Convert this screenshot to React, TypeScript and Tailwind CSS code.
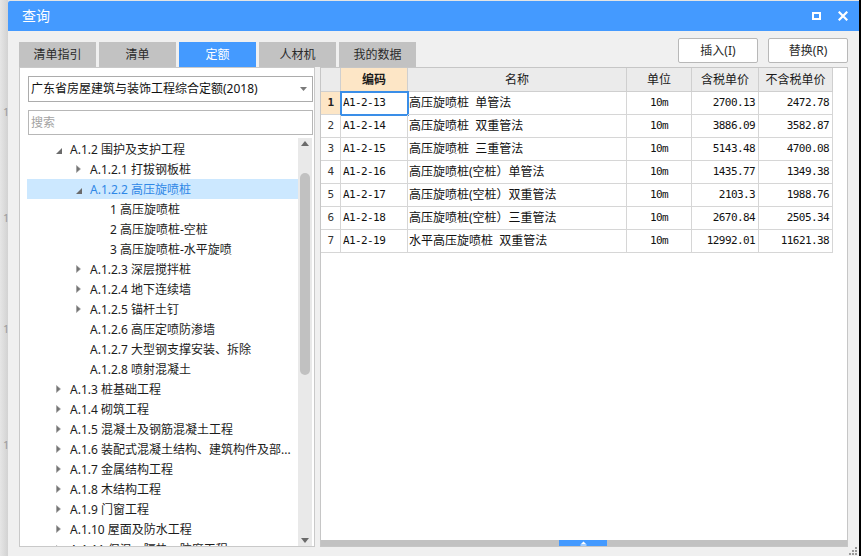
import React from 'react';

const sans = "font-['Noto_Sans','Noto_Sans_CJK_SC',sans-serif]";
const mono = "font-['DejaVu_Sans_Mono','Noto_Sans_CJK_SC',monospace] text-[11px] tracking-[-0.6px]";

type Node = { lvl: 1 | 2 | 3; arrow?: 'open' | 'closed'; text: string; sel?: boolean };

const tree: Node[] = [
  { lvl: 1, arrow: 'open', text: 'A.1.2 围护及支护工程' },
  { lvl: 2, arrow: 'closed', text: 'A.1.2.1 打拔钢板桩' },
  { lvl: 2, arrow: 'open', text: 'A.1.2.2 高压旋喷桩', sel: true },
  { lvl: 3, text: '1 高压旋喷桩' },
  { lvl: 3, text: '2 高压旋喷桩-空桩' },
  { lvl: 3, text: '3 高压旋喷桩-水平旋喷' },
  { lvl: 2, arrow: 'closed', text: 'A.1.2.3 深层搅拌桩' },
  { lvl: 2, arrow: 'closed', text: 'A.1.2.4 地下连续墙' },
  { lvl: 2, arrow: 'closed', text: 'A.1.2.5 锚杆土钉' },
  { lvl: 2, text: 'A.1.2.6 高压定喷防渗墙' },
  { lvl: 2, text: 'A.1.2.7 大型钢支撑安装、拆除' },
  { lvl: 2, text: 'A.1.2.8 喷射混凝土' },
  { lvl: 1, arrow: 'closed', text: 'A.1.3 桩基础工程' },
  { lvl: 1, arrow: 'closed', text: 'A.1.4 砌筑工程' },
  { lvl: 1, arrow: 'closed', text: 'A.1.5 混凝土及钢筋混凝土工程' },
  { lvl: 1, arrow: 'closed', text: 'A.1.6 装配式混凝土结构、建筑构件及部...' },
  { lvl: 1, arrow: 'closed', text: 'A.1.7 金属结构工程' },
  { lvl: 1, arrow: 'closed', text: 'A.1.8 木结构工程' },
  { lvl: 1, arrow: 'closed', text: 'A.1.9 门窗工程' },
  { lvl: 1, arrow: 'closed', text: 'A.1.10 屋面及防水工程' },
  { lvl: 1, arrow: 'closed', text: 'A.1.11 保温、隔热、防腐工程' },
];

const rows = [
  ['1', 'A1-2-13', '高压旋喷桩\u00a0\u00a0单管法', '10m', '2700.13', '2472.78'],
  ['2', 'A1-2-14', '高压旋喷桩\u00a0\u00a0双重管法', '10m', '3886.09', '3582.87'],
  ['3', 'A1-2-15', '高压旋喷桩\u00a0\u00a0三重管法', '10m', '5143.48', '4700.08'],
  ['4', 'A1-2-16', '高压旋喷桩(空桩）单管法', '10m', '1435.77', '1349.38'],
  ['5', 'A1-2-17', '高压旋喷桩(空桩）双重管法', '10m', '2103.3', '1988.76'],
  ['6', 'A1-2-18', '高压旋喷桩(空桩）三重管法', '10m', '2670.84', '2505.34'],
  ['7', 'A1-2-19', '水平高压旋喷桩\u00a0\u00a0双重管法', '10m', '12992.01', '11621.38'],
];

function Arrow({ kind }: { kind?: 'open' | 'closed' }) {
  if (kind === 'open')
    return (
      <svg width="6" height="6" viewBox="0 0 6 6" className="mt-[3px]">
        <polygon points="6,0 6,6 0,6" fill="#6b6b6b" />
      </svg>
    );
  if (kind === 'closed')
    return (
      <svg width="5" height="8" viewBox="0 0 5 8">
        <polygon points="0.5,0.5 4.5,4 0.5,7.5" fill="#737373" stroke="#9a9a9a" strokeWidth="0.6" />
      </svg>
    );
  return null;
}

function TreeRow({ n }: { n: Node }) {
  const spacer = n.lvl === 1 ? 'w-[29px]' : n.lvl === 2 ? 'w-[49px]' : 'w-[69px]';
  return (
    <div
      className={`h-[20px] shrink-0 flex items-center ${
        n.sel ? 'bg-[#cce8ff] text-[#2f87e6]' : 'text-[#1c1c1c]'
      }`}
    >
      <div className={`${spacer} shrink-0`} />
      <div className="w-[14px] shrink-0 flex items-center">
        <Arrow kind={n.arrow} />
      </div>
      <span className="whitespace-nowrap text-[12px] leading-[20px] pt-[1px]">{n.text}</span>
    </div>
  );
}

const headCell = 'h-[24px] border-r border-b border-[#cfcfcf] bg-[#ebebeb] flex items-center justify-center text-[12px] text-[#1a1a1a]';
const cell = 'h-[23px] border-r border-b border-[#d6d6d6] flex items-center';

export default function App() {
  return (
    <div className={`w-[861px] h-[556px] flex overflow-hidden bg-[#f0f0f0] ${sans}`}>
      {/* background strip at left */}
      <div className="w-[8px] h-full shrink-0 flex bg-gradient-to-r from-[#e6e6e6] to-[#d2d2d2]">
        <div className="flex-1 flex flex-col text-[#9a9a9a] text-[11px] leading-none pl-[3px]">
          <div className="h-[106px]" />
          <span>1</span>
          <div className="h-[95px]" />
          <span>1</span>
          <div className="h-[100px]" />
          <span>1</span>
          <div className="h-[105px]" />
          <span>1</span>
        </div>
        <div className="w-[1px] h-full bg-[#a9a9a9]" />
      </div>

      {/* window */}
      <div className="flex-1 flex flex-col relative">
        <div className="h-[1px] bg-[#e4e4e4]" />
        <div className="h-[31px] bg-[#449aff] rounded-tl-[2px] flex items-center pl-[14px] pr-[10px]">
          <span className="text-white text-[14px] leading-none">查询</span>
          <div className="flex-1" />
          <div className="w-[9px] h-[8px] border-2 border-white mr-[17px] mb-[1px]" />
          <svg width="10" height="10" viewBox="0 0 10 10" className="mr-[1px]">
            <path d="M1.5 1.5 L8.5 8.5 M8.5 1.5 L1.5 8.5" stroke="white" strokeWidth="2.2" strokeLinecap="square" />
          </svg>
        </div>

        {/* toolbar */}
        <div className="mt-[7px] h-[29px] flex pl-[11px] pr-[11px]">
          <div className="self-end flex gap-[3px]">
            {['清单指引', '清单', '定额', '人材机', '我的数据'].map((t, i) => (
              <div
                key={t}
                className={`w-[77px] h-[25px] flex items-center justify-center text-[12px] ${
                  i === 2 ? 'bg-[#449aff] text-white' : 'bg-[#c2c2c2] text-[#2a2a2a]'
                }`}
              >
                {t}
              </div>
            ))}
          </div>
          <div className="flex-1" />
          <div className="self-start flex gap-[10px]">
            {['插入(I)', '替换(R)'].map((t) => (
              <div
                key={t}
                className="w-[80px] h-[25px] bg-white border border-[#b8b8b8] rounded-[2px] flex items-center justify-center text-[12px] text-[#2a2a2a]"
              >
                {t}
              </div>
            ))}
          </div>
        </div>

        {/* main */}
        <div className="h-[480px] flex pl-[11px] pr-[11px] gap-[5px]">
          {/* left panel */}
          <div className="w-[296px] h-full bg-white border border-[#c9c9c9] flex flex-col">
            <div className="mt-[8px] ml-[8px] mr-[1px] h-[26px] border border-[#acacac] flex items-center pl-[2px] pr-[5px]">
              <span className="text-[12px] text-[#111] whitespace-nowrap">广东省房屋建筑与装饰工程综合定额(2018)</span>
              <div className="flex-1" />
              <svg width="7" height="4" viewBox="0 0 7 4">
                <polygon points="0,0 7,0 3.5,4" fill="#7a7a7a" />
              </svg>
            </div>
            <div className="mt-[8px] ml-[8px] mr-[1px] h-[25px] border border-[#b7b7b7] flex items-center pl-[2px]">
              <span className="text-[12px] text-[#a3a3a3]">搜索</span>
            </div>
            <div className="mt-[3px] flex-1 min-h-0 flex">
              <div className="ml-[7px] w-[271px] h-full overflow-hidden flex flex-col pt-[1px]">
                {tree.map((n, i) => (
                  <TreeRow key={i} n={n} />
                ))}
              </div>
              <div className="w-[14px] h-full bg-[#e9e9e9] flex flex-col items-center">
                <svg width="8" height="5" viewBox="0 0 8 5" className="mt-[3px]">
                  <polygon points="4,0 8,5 0,5" fill="#6a6a6a" />
                </svg>
                <div className="mt-[27px] w-[10px] h-[202px] rounded-full bg-[#c1c1c1]" />
                <div className="flex-1" />
                <svg width="8" height="5" viewBox="0 0 8 5" className="mb-[3px]">
                  <polygon points="0,0 8,0 4,5" fill="#6a6a6a" />
                </svg>
              </div>
            </div>
          </div>

          {/* right table */}
          <div className="flex-1 h-full bg-white border border-[#c6c6c6] flex flex-col">
            <div className="grid grid-cols-[20px_67px_219px_65px_67px_74px] w-[512px]">
              <div className={headCell} />
              <div className={`${headCell} !bg-[#fde6c6] font-bold`}>编码</div>
              <div className={headCell}>名称</div>
              <div className={headCell}>单位</div>
              <div className={headCell}>含税单价</div>
              <div className={headCell}>不含税单价</div>
              {rows.map((r, i) => (
                <React.Fragment key={i}>
                  <div
                    className={`${cell} justify-center ${mono} ${
                      i === 0 ? 'bg-[#fde6c6] font-bold text-[#222]' : 'text-[#333]'
                    }`}
                  >
                    {r[0]}
                  </div>
                  <div
                    className={`${cell} pl-[2px] ${mono} text-[#111] ${
                      i === 0 ? 'outline-2 outline-[#3a8ee8] -outline-offset-1' : ''
                    }`}
                  >
                    {r[1]}
                  </div>
                  <div className={`${cell} pl-[1px] text-[12px] text-[#111] whitespace-nowrap`}>{r[2]}</div>
                  <div className={`${cell} justify-center ${mono} text-[#111]`}>{r[3]}</div>
                  <div className={`${cell} justify-end pr-[3px] ${mono} text-[#111]`}>{r[4]}</div>
                  <div className={`${cell} justify-end pr-[3px] ${mono} text-[#111]`}>{r[5]}</div>
                </React.Fragment>
              ))}
            </div>
            <div className="flex-1" />
            <div className="h-[6px] bg-[#c2c2c2] flex">
              <div className="w-[238px]" />
              <div className="w-[48px] h-full bg-[#449aff] flex items-center justify-center">
                <svg width="7" height="5" viewBox="0 0 7 5">
                  <polygon points="3.5,0.5 6,3 1,3" fill="white" />
                  <rect x="0.5" y="3.5" width="6" height="1" fill="white" />
                </svg>
              </div>
            </div>
          </div>
        </div>

        {/* bottom band with grip */}
        <div className="flex-1 flex justify-end items-end pr-[2px] pb-[1px]">
          <svg width="8" height="8" viewBox="0 0 8 8">
            <rect x="6" y="0" width="2" height="2" fill="#9a9a9a" />
            <rect x="3" y="3" width="2" height="2" fill="#9a9a9a" />
            <rect x="6" y="3" width="2" height="2" fill="#9a9a9a" />
            <rect x="0" y="6" width="2" height="2" fill="#9a9a9a" />
            <rect x="3" y="6" width="2" height="2" fill="#9a9a9a" />
            <rect x="6" y="6" width="2" height="2" fill="#9a9a9a" />
          </svg>
        </div>
      </div>

      {/* right edge */}
      <div className="w-[2px] h-full bg-black shrink-0" />
    </div>
  );
}
